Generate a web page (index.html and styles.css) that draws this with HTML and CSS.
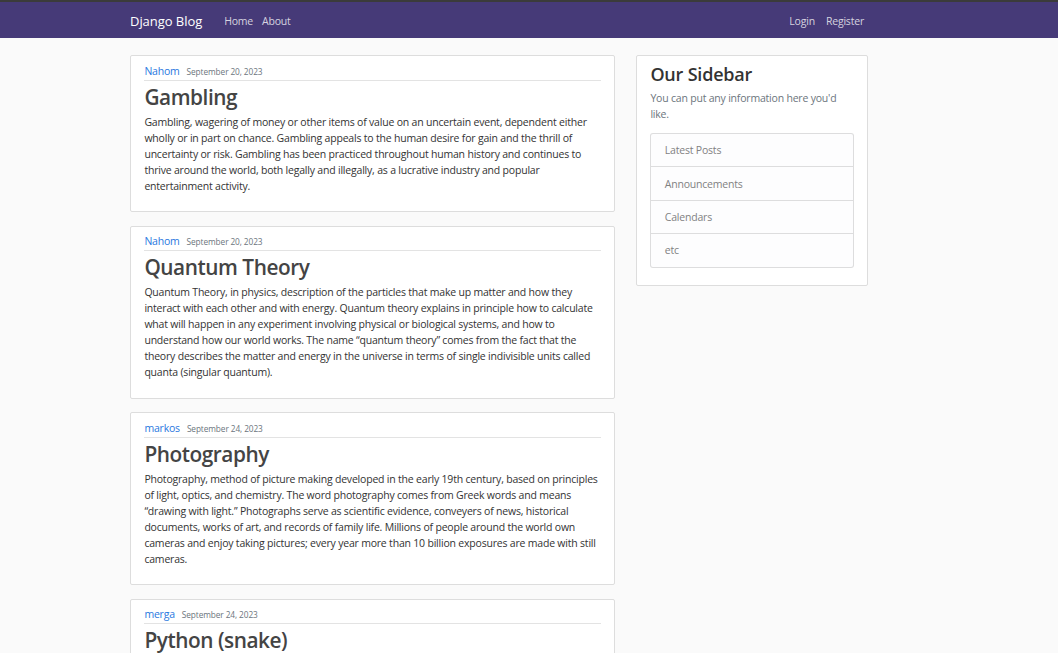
FILE: index.html
```html
<!DOCTYPE html>
<html lang="en">
<head>
<meta charset="utf-8">
<title>Django Blog</title>
<link rel="stylesheet" href="styles.css">
</head>
<body>
<div class="topstrip"></div>
<header class="navbar">
  <div class="nav-inner">
    <div class="nav-left">
      <a class="brand" href="#">Django Blog</a>
      <a class="nav-link" href="#">Home</a>
      <a class="nav-link" href="#">About</a>
    </div>
    <div class="nav-right">
      <a class="nav-link" href="#">Login</a>
      <a class="nav-link" href="#">Register</a>
    </div>
  </div>
</header>
<main class="container">
  <div class="main-col">
    <article class="content-section">
      <div class="article-metadata">
        <a class="author" href="#">Nahom</a>
        <small class="date">September 20, 2023</small>
      </div>
      <h2 class="article-title">Gambling</h2>
      <p class="article-content">Gambling, wagering of money or other items of value on an uncertain event, dependent either wholly or in part on chance. Gambling appeals to the human desire for gain and the thrill of uncertainty or risk. Gambling has been practiced throughout human history and continues to thrive around the world, both legally and illegally, as a lucrative industry and popular entertainment activity.</p>
    </article>
    <article class="content-section">
      <div class="article-metadata">
        <a class="author" href="#">Nahom</a>
        <small class="date">September 20, 2023</small>
      </div>
      <h2 class="article-title">Quantum Theory</h2>
      <p class="article-content">Quantum Theory, in physics, description of the particles that make up matter and how they interact with each other and with energy. Quantum theory explains in principle how to calculate what will happen in any experiment involving physical or biological systems, and how to understand how our world works. The name “quantum theory” comes from the fact that the theory describes the matter and energy in the universe in terms of single indivisible units called quanta (singular quantum).</p>
    </article>
    <article class="content-section">
      <div class="article-metadata">
        <a class="author" href="#">markos</a>
        <small class="date">September 24, 2023</small>
      </div>
      <h2 class="article-title">Photography</h2>
      <p class="article-content">Photography, method of picture making developed in the early 19th century, based on principles of light, optics, and chemistry. The word photography comes from Greek words and means “drawing with light.” Photographs serve as scientific evidence, conveyers of news, historical documents, works of art, and records of family life. Millions of people around the world own cameras and enjoy taking pictures; every year more than 10 billion exposures are made with still cameras.</p>
    </article>
    <article class="content-section">
      <div class="article-metadata">
        <a class="author" href="#">merga</a>
        <small class="date">September 24, 2023</small>
      </div>
      <h2 class="article-title">Python (snake)</h2>
      <p class="article-content">Python, any of various nonvenomous snakes found mainly in the tropics of the Eastern Hemisphere.</p>
    </article>
  </div>
  <aside class="side-col">
    <div class="content-section sidebar">
      <h3 class="side-title">Our Sidebar</h3>
      <p class="side-text">You can put any information here you'd like.</p>
      <ul class="list-group">
        <li class="list-item">Latest Posts</li>
        <li class="list-item">Announcements</li>
        <li class="list-item">Calendars</li>
        <li class="list-item">etc</li>
      </ul>
    </div>
  </aside>
</main>
</body>
</html>
```

FILE: styles.css
```css
* { box-sizing: border-box; }
html, body { margin: 0; padding: 0; }
body {
  background: #fafafa;
  color: #333333;
  font-family: "Open Sans", "Noto Sans", sans-serif;
  font-size: 10.5px;
  letter-spacing: -0.2px;
  line-height: 16px;
  overflow: hidden;
  height: 653px;
}
a { text-decoration: none; }

.topstrip { height: 2px; background: #3b3b3b; }

.navbar {
  background: #463a78;
  height: 36px;
}
.nav-inner {
  width: 738px;
  margin-left: 130px;
  height: 36px;
  padding-top: 2px;
  display: flex;
  align-items: center;
  justify-content: space-between;
}
.nav-left, .nav-right { display: flex; align-items: center; }
.brand {
  color: #ffffff;
  font-size: 13px;
  letter-spacing: -0.05px;
  margin-right: 17.5px;
}
.nav-link {
  color: rgba(255, 255, 255, 0.78);
  padding: 0 4.5px;
}
.nav-right .nav-link:first-child { margin-right: 2px; }
.nav-right .nav-link:last-child { padding-right: 4px; }

.container {
  width: 738px;
  margin: 17px 0 0 130px;
  display: flex;
  gap: 21px;
  align-items: flex-start;
}
.main-col { width: 485px; }
.side-col { width: 232px; }

.content-section {
  background: #ffffff;
  padding: 6.5px 13.4px;
  border: 1px solid #dddddd;
  border-radius: 2px;
  margin-bottom: 13.4px;
}
.article-metadata {
  padding-bottom: 1px;
  margin-bottom: 2.5px;
  border-bottom: 1px solid #e3e3e3;
  display: flex;
  align-items: baseline;
  height: 18px;
}
.author {
  color: #2a78e0;
  margin-right: 7px;
}
.date {
  color: #6c757d;
  font-size: 8.3px;
  letter-spacing: -0.1px;
}
.article-title {
  color: #444444;
  font-size: 20.8px;
  line-height: 25.5px;
  font-weight: 600;
  letter-spacing: -0.45px;
  padding-top: 1.5px;
  margin: 0 0 3.5px;
}
.article-content {
  margin: 0 0 11.2px;
}

.side-title {
  color: #333;
  font-size: 18px;
  line-height: 22.5px;
  font-weight: 600;
  letter-spacing: -0.2px;
  margin: 0 0 5.4px;
}
.side-text {
  color: #6c757d;
  margin: 0 0 10.7px;
}
.list-group {
  list-style: none;
  margin: 0 0 10.7px;
  padding: 0;
}
.list-item {
  background: #fdfdfe;
  color: #818182;
  padding: 8.2px 13.4px;
  border: 1px solid rgba(0, 0, 0, 0.125);
  margin-bottom: -1px;
}
.list-item:first-child { border-radius: 3px 3px 0 0; }
.list-item:last-child { border-radius: 0 0 3px 3px; margin-bottom: 0; }
```
